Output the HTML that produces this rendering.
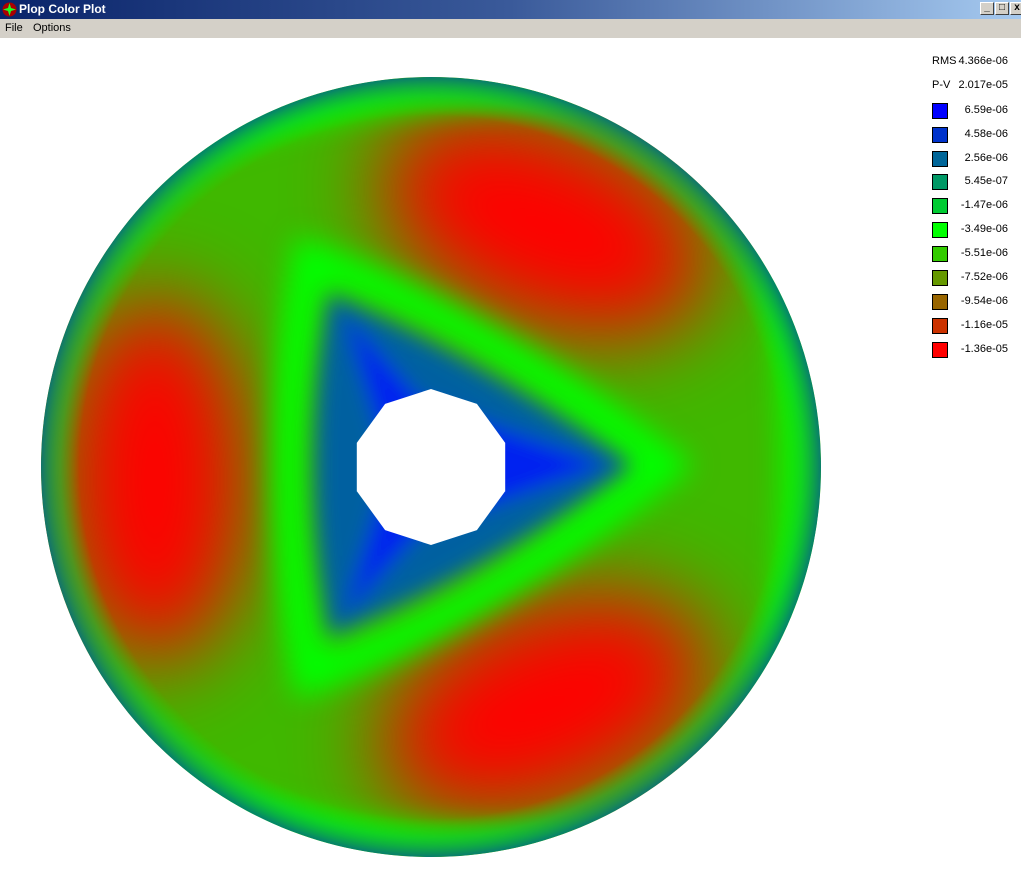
<!DOCTYPE html>
<html><head><style>
body{margin:0;width:1021px;height:875px;overflow:hidden;background:#fff;font-family:"Liberation Sans",sans-serif;position:relative}
.tb{position:absolute;left:0;top:0;width:1021px;height:19px;background:linear-gradient(90deg,#0a246a 0%,#3a5a9a 50%,#a6caf0 100%)}
.tb span{position:absolute;left:19px;top:2px;color:#fff;font-weight:bold;font-size:12px}
.mb{position:absolute;left:0;top:19px;width:1021px;height:19px;background:#d4d0c8;font-size:11px}
.mb span{position:absolute;top:3px}
.btn{position:absolute;top:2px;width:14px;height:13px;background:#d4d0c8;border:1px solid;border-color:#fff #404040 #404040 #fff;box-sizing:border-box;font-size:10px;line-height:10px;text-align:center;font-weight:bold}
.lg{position:absolute;font-size:11px;color:#000}
.sq{position:absolute;left:932px;width:14px;height:14px;border:1px solid #000}
.v{position:absolute;right:13px;font-size:11px}
</style></head><body>
<div class="tb"><svg style="position:absolute;left:2px;top:2px" width="15" height="15" viewBox="0 0 15 15"><circle cx="7.5" cy="7.5" r="7" fill="#a00"/><path d="M7.5 1 L9 6 L14 7.5 L9 9 L7.5 14 L6 9 L1 7.5 L6 6Z" fill="#2f2"/></svg><span>Plop Color Plot</span>
<div class="btn" style="left:980px">_</div><div class="btn" style="left:995px">□</div><div class="btn" style="left:1010px">x</div></div>
<div class="mb"><span style="left:5px">File</span><span style="left:33px">Options</span></div>
<svg style="position:absolute;left:0;top:0" width="1021" height="875">
<defs>
<clipPath id="c"><circle cx="431" cy="467" r="390"/></clipPath>
<filter id="b1" x="-50%" y="-50%" width="200%" height="200%"><feGaussianBlur stdDeviation="45"/></filter>
<filter id="b2" x="-50%" y="-50%" width="200%" height="200%"><feGaussianBlur stdDeviation="14"/></filter>
<filter id="b3" x="-50%" y="-50%" width="200%" height="200%"><feGaussianBlur stdDeviation="10"/></filter>
<radialGradient id="rim" cx="431" cy="467" r="390" gradientUnits="userSpaceOnUse">
<stop offset="0.9" stop-color="#00ff00" stop-opacity="0"/><stop offset="0.95" stop-color="#00cc40" stop-opacity="0.5"/><stop offset="1" stop-color="#007080" stop-opacity="0.85"/></radialGradient>
</defs>
<g clip-path="url(#c)">
<rect x="0" y="0" width="1021" height="875" fill="#40b800"/>
<g filter="url(#b1)">
<ellipse cx="155" cy="480" rx="95" ry="185" fill="#ff0000"/>
<ellipse cx="545" cy="225" rx="175" ry="100" transform="rotate(22 545 225)" fill="#ff0000"/>
<ellipse cx="545" cy="705" rx="175" ry="100" transform="rotate(-22 545 705)" fill="#ff0000"/>
</g>
<g filter="url(#b2)">
<path d="M310 260 Q480 320 665 465 Q480 615 310 675 Q270 467 310 260Z" fill="none" stroke="#00ff00" stroke-width="36"/>
<path d="M60 230 Q250 60 700 100" fill="none" stroke="#00ff00" stroke-width="22"/>
<path d="M60 710 Q250 880 700 830" fill="none" stroke="#00ff00" stroke-width="22"/>
<path d="M765 200 Q820 467 765 730" fill="none" stroke="#00ff00" stroke-width="22"/>
</g>
<g filter="url(#b3)">
<path d="M330 295 Q480 360 630 465 Q480 575 330 635 Q300 467 330 295Z" fill="#0060a0"/>
<path d="M345 315 L420 400 L605 465 L420 530 L345 615 L390 467Z" fill="#0020f0"/>
</g>
<circle cx="431" cy="467" r="390" fill="url(#rim)"/>
</g>
<polygon points="431,389 476.9,403.9 505.2,442.9 505.2,491.1 476.9,530.1 431,545 385.1,530.1 356.8,491.1 356.8,442.9 385.1,403.9" fill="#fff"/>
</svg>
<div class="lg" style="left:932px;top:55px">RMS</div><div class="lg v" style="top:55px">4.366e-06</div>
<div class="lg" style="left:932px;top:79px">P-V</div><div class="lg v" style="top:79px">2.017e-05</div>
<div class="sq" style="top:103px;background:#0000ff"></div><div class="v" style="top:104px">6.59e-06</div>
<div class="sq" style="top:127px;background:#0033cc"></div><div class="v" style="top:128px">4.58e-06</div>
<div class="sq" style="top:151px;background:#006699"></div><div class="v" style="top:152px">2.56e-06</div>
<div class="sq" style="top:174px;background:#009966"></div><div class="v" style="top:175px">5.45e-07</div>
<div class="sq" style="top:198px;background:#00cc33"></div><div class="v" style="top:199px">-1.47e-06</div>
<div class="sq" style="top:222px;background:#00ff00"></div><div class="v" style="top:223px">-3.49e-06</div>
<div class="sq" style="top:246px;background:#33cc00"></div><div class="v" style="top:247px">-5.51e-06</div>
<div class="sq" style="top:270px;background:#669900"></div><div class="v" style="top:271px">-7.52e-06</div>
<div class="sq" style="top:294px;background:#996600"></div><div class="v" style="top:295px">-9.54e-06</div>
<div class="sq" style="top:318px;background:#cc3300"></div><div class="v" style="top:319px">-1.16e-05</div>
<div class="sq" style="top:342px;background:#ff0000"></div><div class="v" style="top:343px">-1.36e-05</div>
</body></html>
